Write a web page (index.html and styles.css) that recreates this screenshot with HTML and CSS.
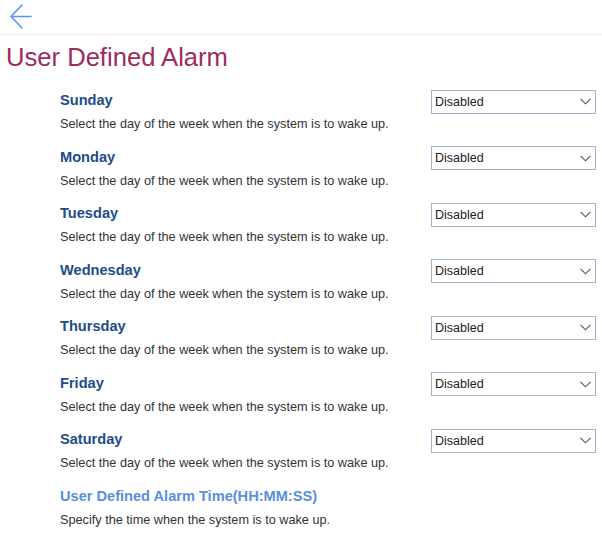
FILE: index.html
```html
<!DOCTYPE html>
<html>
<head>
<meta charset="utf-8">
<link rel="stylesheet" href="styles.css">
</head>
<body>
<header class="topbar">
  <svg class="back" width="24" height="28" viewBox="0 0 24 28">
    <path d="M13 2 L2 13.5 L13 25 M2 13.5 H22" fill="none" stroke="#5b93ee" stroke-width="1.6" stroke-linecap="round" stroke-linejoin="round"/>
  </svg>
</header>
<h1 class="title">User Defined Alarm</h1>
<main class="list">
  <div class="row">
    <div class="info"><div class="label">Sunday</div><div class="desc">Select the day of the week when the system is to wake up.</div></div>
    <div class="select"><span>Disabled</span><svg class="chev" width="11" height="7" viewBox="0 0 11 7"><path d="M0.5 0.8 L5.5 5.8 L10.5 0.8" fill="none" stroke="#555" stroke-width="1.1"/></svg></div>
  </div>
  <div class="row">
    <div class="info"><div class="label">Monday</div><div class="desc">Select the day of the week when the system is to wake up.</div></div>
    <div class="select"><span>Disabled</span><svg class="chev" width="11" height="7" viewBox="0 0 11 7"><path d="M0.5 0.8 L5.5 5.8 L10.5 0.8" fill="none" stroke="#555" stroke-width="1.1"/></svg></div>
  </div>
  <div class="row">
    <div class="info"><div class="label">Tuesday</div><div class="desc">Select the day of the week when the system is to wake up.</div></div>
    <div class="select"><span>Disabled</span><svg class="chev" width="11" height="7" viewBox="0 0 11 7"><path d="M0.5 0.8 L5.5 5.8 L10.5 0.8" fill="none" stroke="#555" stroke-width="1.1"/></svg></div>
  </div>
  <div class="row">
    <div class="info"><div class="label">Wednesday</div><div class="desc">Select the day of the week when the system is to wake up.</div></div>
    <div class="select"><span>Disabled</span><svg class="chev" width="11" height="7" viewBox="0 0 11 7"><path d="M0.5 0.8 L5.5 5.8 L10.5 0.8" fill="none" stroke="#555" stroke-width="1.1"/></svg></div>
  </div>
  <div class="row">
    <div class="info"><div class="label">Thursday</div><div class="desc">Select the day of the week when the system is to wake up.</div></div>
    <div class="select"><span>Disabled</span><svg class="chev" width="11" height="7" viewBox="0 0 11 7"><path d="M0.5 0.8 L5.5 5.8 L10.5 0.8" fill="none" stroke="#555" stroke-width="1.1"/></svg></div>
  </div>
  <div class="row">
    <div class="info"><div class="label">Friday</div><div class="desc">Select the day of the week when the system is to wake up.</div></div>
    <div class="select"><span>Disabled</span><svg class="chev" width="11" height="7" viewBox="0 0 11 7"><path d="M0.5 0.8 L5.5 5.8 L10.5 0.8" fill="none" stroke="#555" stroke-width="1.1"/></svg></div>
  </div>
  <div class="row">
    <div class="info"><div class="label">Saturday</div><div class="desc">Select the day of the week when the system is to wake up.</div></div>
    <div class="select"><span>Disabled</span><svg class="chev" width="11" height="7" viewBox="0 0 11 7"><path d="M0.5 0.8 L5.5 5.8 L10.5 0.8" fill="none" stroke="#555" stroke-width="1.1"/></svg></div>
  </div>
  <div class="row">
    <div class="info"><div class="label link">User Defined Alarm Time(HH:MM:SS)</div><div class="desc">Specify the time when the system is to wake up.</div></div>
  </div>
</main>
</body>
</html>
```
FILE: styles.css
```css
* { box-sizing: border-box; }
html, body { margin: 0; padding: 0; background: #fff; }
body {
  font-family: "Liberation Sans", Arial, sans-serif;
  width: 602px;
  height: 545px;
  overflow: hidden;
}
.topbar {
  height: 35px;
  border-bottom: 1px solid #f3e9ed;
  padding: 3px 0 0 9px;
}
.back { display: block; }
.title {
  margin: 7px 0 0 6px;
  font-size: 25.6px;
  line-height: 30px;
  font-weight: normal;
  color: #9c2b60;
}
.list {
  margin-top: 17px;
  padding-left: 60px;
  padding-right: 6px;
}
.row {
  display: flex;
  justify-content: space-between;
  align-items: flex-start;
  height: 56.5px;
}
.label {
  font-size: 14.6px;
  line-height: 23px;
  font-weight: bold;
  color: #1d4c8a;
}
.label.link { color: #5a8fdc; }
.desc {
  margin-top: 4px;
  font-size: 12.7px;
  line-height: 16px;
  color: #333;
}
.select {
  width: 165px;
  height: 24px;
  margin-top: 0.5px;
  border: 1px solid #9db4cf;
  display: flex;
  align-items: center;
  justify-content: space-between;
  padding: 0 4px 0 3px;
  font-size: 12.5px;
  color: #222;
}
.chev { margin-right: 0; }
```
